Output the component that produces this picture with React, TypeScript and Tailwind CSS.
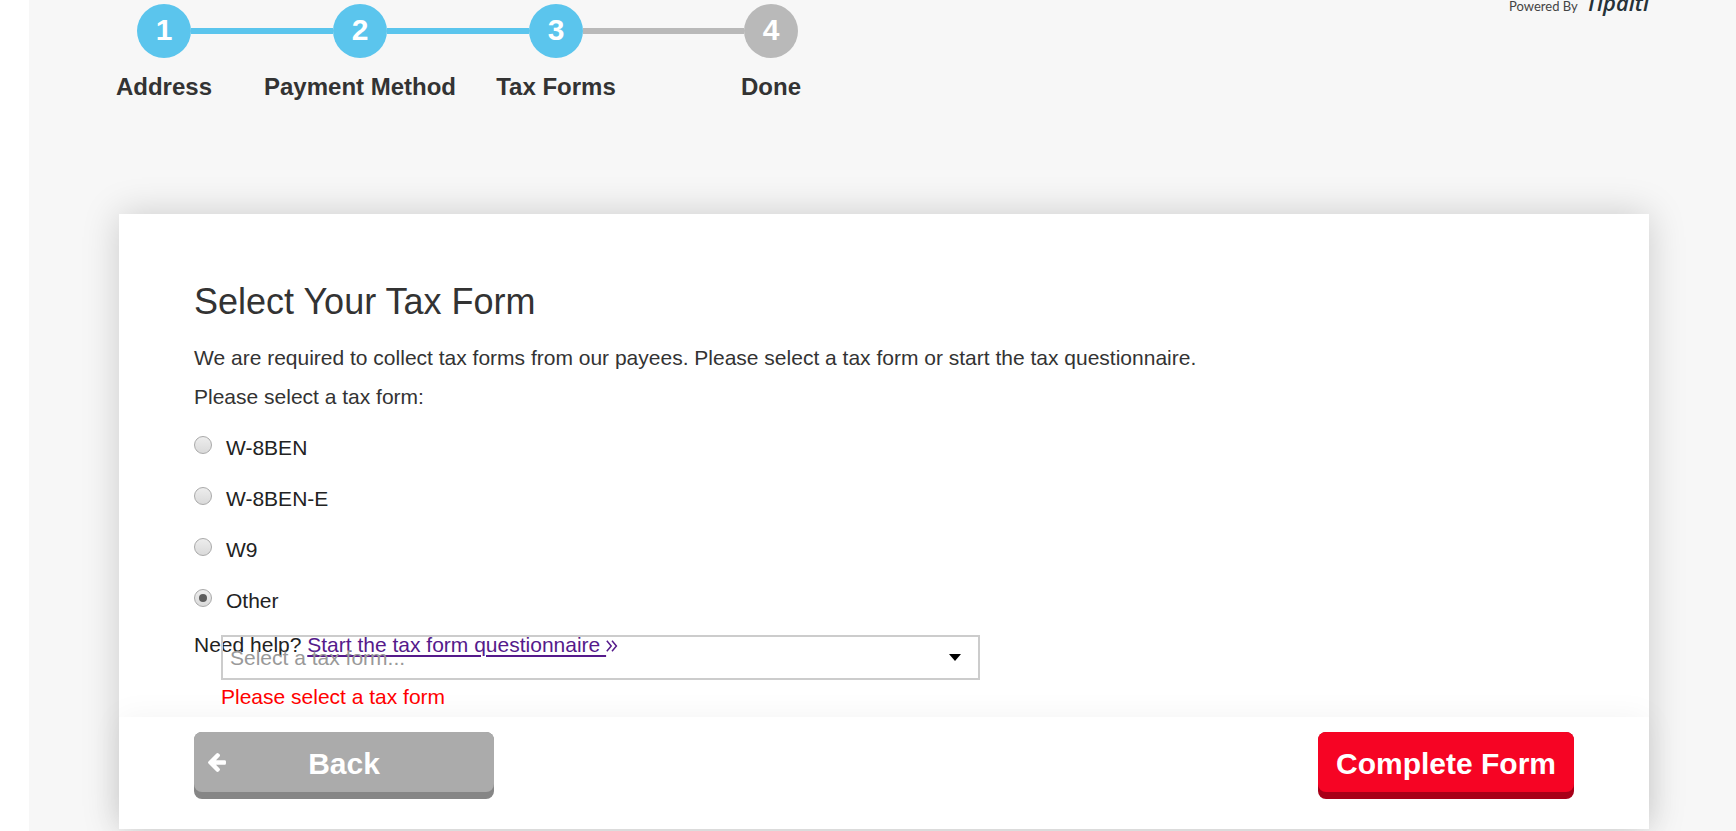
import React, { useState } from 'react';

interface Step {
  id: number;
  label: string;
  done: boolean;
}

const steps: Step[] = [
  { id: 1, label: 'Address', done: true },
  { id: 2, label: 'Payment Method', done: true },
  { id: 3, label: 'Tax Forms', done: true },
  { id: 4, label: 'Done', done: false },
];

const taxForms = ['W-8BEN', 'W-8BEN-E', 'W9', 'Other'];

const lineColor = (step?: Step) => {
  if (!step) return 'bg-transparent';
  return step.done ? 'bg-[#5bc5ed]' : 'bg-[#b9b9b9]';
};

const StepBar: React.FC = () => (
  <ol className="grid grid-cols-[196px_196px_196px_234px] pt-1">
    {steps.map((step, index) => (
      <li key={step.id} className="flex flex-col items-center">
        <div className="flex w-full items-center">
          <span className={`h-[6px] flex-1 ${lineColor(index > 0 ? step : undefined)}`} />
          <span
            className={`flex h-[54px] w-[54px] items-center justify-center rounded-full pb-[3px] text-[30px] font-bold text-white ${
              step.done ? 'bg-[#5bc5ed]' : 'bg-[#b9b9b9]'
            }`}
          >
            {step.id}
          </span>
          {/* The right half takes the colour of the step it leads to */}
          <span className={`h-[6px] flex-1 ${lineColor(steps[index + 1])}`} />
        </div>
        <span className="mt-[13px] text-2xl font-bold whitespace-nowrap">{step.label}</span>
      </li>
    ))}
  </ol>
);

const PoweredBy: React.FC = () => (
  <div className="-mt-2 flex items-baseline gap-2 whitespace-nowrap font-['Open_Sans',sans-serif] leading-5 text-[#263238]">
    <span className="font-['Lato',sans-serif] text-[13px] text-[#444444]">Powered By</span>
    <span className="text-[22px] font-semibold italic">Tipalti</span>
  </div>
);

export default function App() {
  const [selected, setSelected] = useState('Other');

  return (
    <div className="bg-white pl-[29px] font-['Liberation_Sans',Arial,sans-serif] text-[#333333]">
      <div className="min-h-screen overflow-hidden bg-[#f7f7f7] pb-[2px]">
        <header className="flex h-[214px] items-start justify-between pr-[87px] pl-[37px]">
          <StepBar />
          <PoweredBy />
        </header>

        <main className="mr-[87px] ml-[90px] bg-white shadow-[0_0_35px_rgba(0,0,0,0.18)]">
          <form onSubmit={(e) => e.preventDefault()}>
            <div className="px-[75px] pt-[68px] pb-[54px] text-[21px] leading-[39px]">
              <h1 className="mb-4 text-4xl leading-10">Select Your Tax Form</h1>
              <p>We are required to collect tax forms from our payees. Please select a tax form or start the tax questionnaire.</p>

              <fieldset>
                <legend className="mb-[6px]">Please select a tax form:</legend>
                {taxForms.map((form) => (
                  <label key={form} className="flex h-[51px] items-center text-[#222222]">
                    <input
                      type="radio"
                      name="taxForm"
                      value={form}
                      checked={selected === form}
                      onChange={() => setSelected(form)}
                      className="mr-[14px] mb-[5px] flex h-[18px] w-[18px] appearance-none items-center justify-center rounded-full border border-[#a9a9a9] bg-linear-to-b from-[#ededed] to-[#dadada] checked:before:h-[8px] checked:before:w-[8px] checked:before:rounded-full checked:before:bg-[#5c5c5c] checked:before:content-['']"
                    />
                    {form}
                  </label>
                ))}
              </fieldset>

              <div className="relative">
                {/* Form list floats over the help line */}
                <div className="absolute top-[9px] left-[27px] w-full max-w-[759px]">
                  <select
                    aria-label="Tax form"
                    defaultValue=""
                    className="block h-[45px] w-full appearance-none border-2 border-[#cccccc] bg-transparent px-[7px] leading-6 text-[#999999]"
                  >
                    <option value="">Select a tax form...</option>
                    <option value="8233">8233</option>
                    <option value="W-8IMY">W-8IMY</option>
                  </select>
                  <svg className="pointer-events-none absolute top-[19px] right-[19px]" width="12" height="7" viewBox="0 0 12 7">
                    <path d="M0 0h12L6 7z" fill="#000000" />
                  </svg>
                  <p className="leading-[34px] text-[#ff0000]">Please select a tax form</p>
                </div>
                <p className="leading-[37px] text-[#222222]">
                  Need help?{' '}
                  <a href="#questionnaire" className="text-[#551a8b]">
                    <span className="whitespace-pre underline decoration-2 underline-offset-3">Start the tax form questionnaire </span>
                    <svg className="inline-block align-baseline" width="12" height="12" viewBox="0 0 12 12" fill="none" stroke="currentColor" strokeWidth="1.5">
                      <path d="M.8.8L5.2 6L.8 11.2M6 .8L10.4 6L6 11.2" />
                    </svg>
                  </a>
                </p>
              </div>
            </div>

            <footer className="flex items-start justify-between bg-white px-[75px] pt-[15px] pb-[30px] shadow-[0_0_30px_rgba(0,0,0,0.05)]">
              <button type="button" className="relative rounded-lg bg-[#868686] pb-[7px] text-[30px] leading-[56px] font-bold text-white">
                <span className="block w-[300px] rounded-lg bg-[#ababab] pt-1">Back</span>
                <svg className="absolute top-[21px] left-[14px]" width="18" height="19" viewBox="64 181 1472 1558" fill="currentColor">
                  <path d="M1536 896v128q0 53-32.500 90.500T1419 1152H715l293 294q38 36 38 90t-38 90l-75 76q-37 37-90 37-52 0-91-37L101 1050Q64 1013 64 960q0-52 37-91l651-650q38-38 91-38 52 0 90 38l75 74q38 38 38 91t-38 91L715 768h704q52 0 84.500 37.500T1536 896z" />
                </svg>
              </button>
              <button type="submit" className="rounded-lg bg-[#a80018] pb-[7px] text-[30px] leading-[56px] font-bold text-white">
                <span className="block w-[256px] rounded-lg bg-[#f60424] pt-1">Complete Form</span>
              </button>
            </footer>
          </form>
        </main>
      </div>
    </div>
  );
}
